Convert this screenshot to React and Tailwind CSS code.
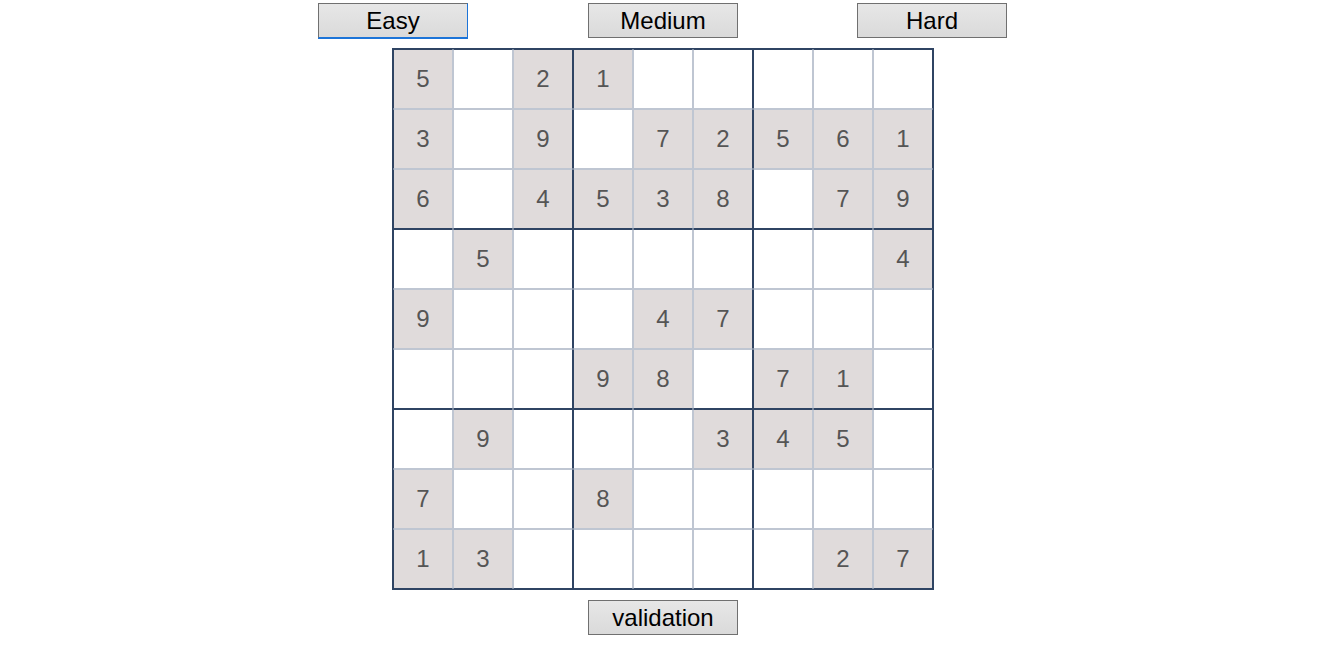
import React from 'react';

const puzzle = [
  '5.21.....',
  '3.9.72561',
  '6.4538.79',
  '.5......4',
  '9...47...',
  '...98.71.',
  '.9...345.',
  '7..8.....',
  '13.....27',
];

function Button({ label, focused, className = '' }) {
  return (
    <button
      className={`w-[150px] h-[35px] bg-gradient-to-b from-[#e7e7e7] to-[#dadada] border text-[24px] leading-none text-black ${
        focused
          ? 'border-t-[#707070] border-l-[#707070] border-r-[#1c74d8] border-b-[#1c74d8] shadow-[0_1px_0_#1c74d8]'
          : 'border-[#707070]'
      } ${className}`}
      style={{ fontFamily: '"Liberation Sans", Arial, sans-serif' }}
    >
      {label}
    </button>
  );
}

export default function App() {
  return (
    <div
      className="w-[1319px] h-[660px] bg-white flex flex-col"
      style={{ fontFamily: '"Liberation Sans", Arial, sans-serif' }}
    >
      {/* level buttons */}
      <div className="flex pl-[318px] pt-[3px]">
        <Button label="Easy" focused />
        <Button label="Medium" className="ml-[120px]" />
        <Button label="Hard" className="ml-[119px]" />
      </div>

      {/* board */}
      <div className="mt-[10px] ml-[392px] w-[542px] border border-[#2f4463] grid grid-cols-9">
        {puzzle.map((row, r) =>
          row.split('').map((ch, c) => {
            const given = ch !== '.';
            const rightDark = c % 3 === 2;
            const leftDark = c % 3 === 0;
            const bottomDark = r % 3 === 2;
            const topDark = r % 3 === 0;
            return (
              <div
                key={`${r}-${c}`}
                className={`h-[60px] flex items-center justify-center text-[24px] text-[#555555] border border-[#bfc6d2] ${
                  given ? 'bg-[#e0dbdb]' : 'bg-white'
                } ${rightDark ? 'border-r-[#2f4463]' : ''} ${leftDark ? 'border-l-[#2f4463]' : ''} ${
                  bottomDark ? 'border-b-[#2f4463]' : ''
                } ${topDark ? 'border-t-[#2f4463]' : ''}`}
              >
                {given ? ch : ''}
              </div>
            );
          })
        )}
      </div>

      <div className="flex pl-[588px] mt-[10px]">
        <Button label="validation" />
      </div>
    </div>
  );
}
